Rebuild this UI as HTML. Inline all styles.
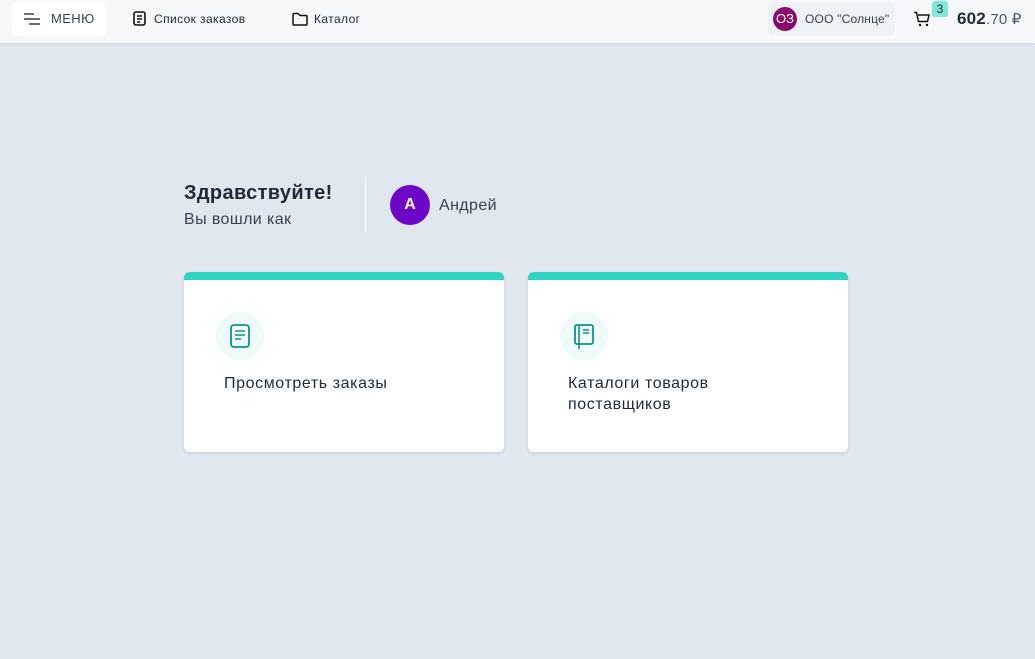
<!DOCTYPE html>
<html><head><meta charset="utf-8"><style>
*{box-sizing:border-box;margin:0;padding:0}
body{width:1035px;height:659px;background:#e1e7ef;font-family:"Liberation Sans",sans-serif;color:#1f2937;position:relative;overflow:hidden}
.top{position:absolute;left:0;top:0;width:1035px;height:43px;background:#f7f8fa;box-shadow:0 1px 2px rgba(0,0,0,.08)}
.abs{position:absolute}
.menu{left:12px;top:2px;width:94px;height:34px;background:#fff;border-radius:5px}
.t{font-size:12px;color:#1f2937;letter-spacing:0.4px}
.card{position:absolute;top:272px;width:320px;height:180px;background:#fff;border-radius:6px;border-top:8px solid #2dd4bf;box-shadow:0 1px 3px rgba(0,0,0,.12)}
.ic{position:absolute;left:32px;top:32px;width:48px;height:48px;border-radius:50%;background:#effbf8}
.ct{position:absolute;left:40px;top:93px;font-size:16px;line-height:21px;color:#1f2937;letter-spacing:0.6px}
</style></head><body>
<div class="top">
 <div class="abs menu"></div>
 <svg class="abs" style="left:24px;top:13px" width="18" height="12" viewBox="0 0 18 12"><path d="M0 1h10M0 6h16M5 11h11" stroke="#374151" stroke-width="1.6"/></svg>
 <div class="abs t" style="left:51px;top:11px;font-size:13px;color:#374151">МЕНЮ</div>
 <svg class="abs" style="left:133px;top:11px" width="14" height="16" viewBox="0 0 14 16"><rect x="1" y="1" width="11" height="13" rx="2" fill="none" stroke="#111" stroke-width="1.6"/><path d="M4 5h5M4 8h5M4 11h3" stroke="#111" stroke-width="1.4"/></svg>
 <div class="abs t" style="left:154px;top:12px">Список заказов</div>
 <svg class="abs" style="left:292px;top:12px" width="16" height="14" viewBox="0 0 16 14"><path d="M1 2.5a1 1 0 0 1 1-1h4l2 2h6a1 1 0 0 1 1 1v7.5a1 1 0 0 1-1 1H2a1 1 0 0 1-1-1z" fill="none" stroke="#111" stroke-width="1.5"/></svg>
 <div class="abs t" style="left:314px;top:12px">Каталог</div>
 <div class="abs" style="left:768px;top:2px;width:127px;height:34px;background:#eef1f5;border-radius:5px"></div>
 <div class="abs" style="left:773px;top:7px;width:24px;height:24px;border-radius:50%;background:#8b0a6a;color:#fff;font-size:13px;text-align:center;line-height:24px">ОЗ</div>
 <div class="abs t" style="left:805px;top:12px;color:#374151;letter-spacing:0.2px">ООО "Солнце"</div>
 <svg class="abs" style="left:913px;top:11px" width="18" height="16" viewBox="0 0 18 16"><path d="M1 1.5h2.5l2 9h9l1.5-6.5H5" fill="none" stroke="#111" stroke-width="1.5"/><circle cx="7" cy="14" r="1.2" fill="#111"/><circle cx="14" cy="14" r="1.2" fill="#111"/></svg>
 <div class="abs" style="left:932px;top:1px;width:16px;height:16px;background:#7ee8d4;border-radius:3px;font-size:12px;text-align:center;line-height:16px;color:#1f2937">3</div>
 <div class="abs" style="left:957px;top:9px;font-size:17px;color:#1f2937;letter-spacing:0.2px"><b>602</b><span style="font-size:15px;color:#4b5563">.70 ₽</span></div>
</div>
<div class="abs" style="left:184px;top:182px;font-size:20px;font-weight:bold;color:#1f2937;letter-spacing:0.35px">Здравствуйте!</div>
<div class="abs" style="left:184px;top:211px;font-size:16px;color:#374151;letter-spacing:0.4px">Вы вошли как</div>
<div class="abs" style="left:365px;top:178px;width:1px;height:54px;background:#fff"></div>
<div class="abs" style="left:390px;top:185px;width:40px;height:40px;border-radius:50%;background:#6d06c6;color:#fff;font-size:16px;font-weight:bold;text-align:center;line-height:40px">А</div>
<div class="abs" style="left:439px;top:197px;font-size:16px;color:#374151;letter-spacing:0.4px">Андрей</div>
<div class="card" style="left:184px">
 <div class="ic"><svg style="position:absolute;left:14px;top:12px" width="20" height="24" viewBox="0 0 20 24"><rect x="1" y="1" width="18" height="22" rx="3" fill="none" stroke="#0d9488" stroke-width="1.8"/><path d="M5 7h10M5 11h10M5 15h6" stroke="#0d9488" stroke-width="1.6"/></svg></div>
 <div class="ct">Просмотреть заказы</div>
</div>
<div class="card" style="left:528px">
 <div class="ic"><svg style="position:absolute;left:14px;top:12px" width="20" height="26" viewBox="0 0 20 26"><rect x="1" y="1" width="18" height="19" rx="2" fill="none" stroke="#0d9488" stroke-width="1.8"/><path d="M5 1v24M9 6h6M9 9h6" stroke="#0d9488" stroke-width="1.6"/></svg></div>
 <div class="ct">Каталоги товаров<br>поставщиков</div>
</div>
</body></html>
